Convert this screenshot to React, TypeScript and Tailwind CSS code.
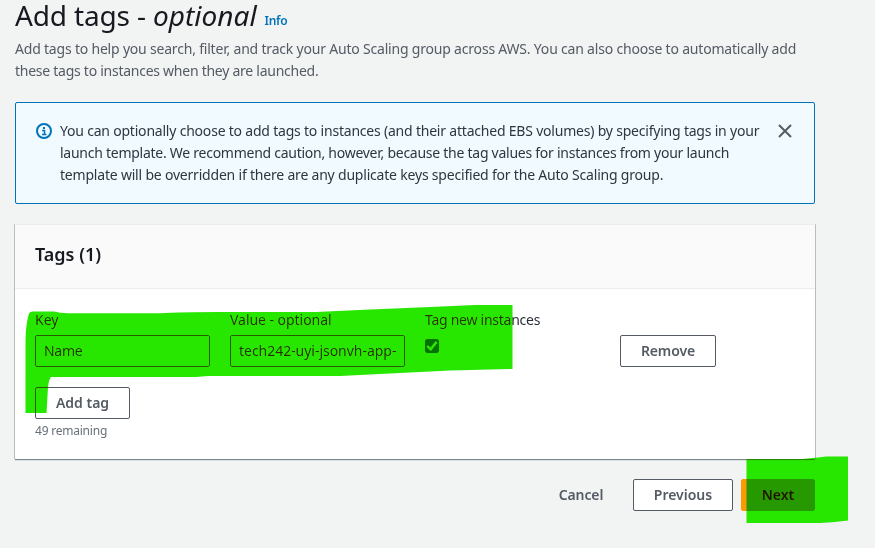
import type { ReactNode } from "react";

function Button({ children, className }: { children: ReactNode; className: string }) {
  return (
    <button
      className={`flex h-8 shrink-0 items-center justify-center whitespace-nowrap rounded-[2px] border text-sm font-semibold leading-[22px] ${className}`}
    >
      {children}
    </button>
  );
}

function TextField({ label, value, trackingClass }: { label: string; value: string; trackingClass: string }) {
  return (
    <div className="w-[175px]">
      <div className="h-[22px] whitespace-nowrap leading-[22px] tracking-[-0.04px]">{label}</div>
      <div
        className={`mt-1 flex h-8 items-center overflow-hidden whitespace-nowrap rounded-[2px] border border-[#545b64] bg-white px-2 ${trackingClass}`}
      >
        {value}
      </div>
    </div>
  );
}

function InfoIcon() {
  return (
    <svg viewBox="0 0 16 16" className="mt-[3px] h-4 w-4 shrink-0" fill="none" stroke="#0073bb">
      <circle cx="8" cy="8" r="7" strokeWidth="2" />
      <path d="M6 7.500h2.500V12M6 11.500h4.500" strokeWidth="1.6" />
      <path d="M7 5h2" strokeWidth="2" />
    </svg>
  );
}

function CloseIcon() {
  return (
    <svg viewBox="0 0 14 14" className="mt-1 h-3.5 w-3.5 shrink-0" fill="none" stroke="#545b64" strokeWidth="2">
      <path d="M1 1l12 12M13 1L1 13" />
    </svg>
  );
}

function Highlights() {
  return (
    <svg
      viewBox="0 0 875 548"
      className="pointer-events-none absolute left-0 top-0 h-[548px] w-[875px] mix-blend-darken"
      fill="#27e600"
    >
      <path d="M25.500 413V340Q26 322 29 313.500Q30 311.500 33 311.500H54Q60 313 68 313.200H160Q180 312 220 312H316L370 309.500L430 307L475 305H512.500V369L450 370.500L400 373L340 376H208L196 377H51Q49 379 48 387L46.500 413Z" />
      <path d="M746.500 459H802L818 457.500L826 456.500H848V520.500L832 522.300L820 523H746.500Z" />
    </svg>
  );
}

export default function App() {
  return (
    <div className="relative isolate h-[548px] w-[875px] bg-[#f2f3f3] pl-[15px] font-['Noto_Sans','Open_Sans',sans-serif] text-sm text-[#16191f]">
      <header className="h-[102px] w-[800px]">
        <h1 className="flex h-[36px] items-baseline whitespace-nowrap text-[28px] leading-[31px]">
          <span className="whitespace-pre tracking-[-0.15px]">Add tags - </span>
          <i>optional</i>
          <a className="relative -top-px ml-[8px] text-xs font-semibold tracking-[-0.3px] text-[#0073bb]">Info</a>
        </h1>
        <p className="mt-[2px] whitespace-nowrap leading-[22px] text-[#545b64]">
          <span className="block tracking-[-0.197px]">
            Add tags to help you search, filter, and track your Auto Scaling group across AWS. You can also choose to automatically add
          </span>
          <span className="block tracking-[-0.26px]">these tags to instances when they are launched.</span>
        </p>
      </header>

      <section className="flex h-[102px] w-[800px] rounded-[2px] border border-[#0073bb] bg-[#f1faff] pl-5 pt-[17px] text-[#2f363f]">
        <InfoIcon />
        <p className="ml-2 w-[718px] whitespace-nowrap leading-[22px]">
          <span className="block tracking-[-0.207px]">
            You can optionally choose to add tags to instances (and their attached EBS volumes) by specifying tags in your
          </span>
          <span className="block tracking-[-0.26px]">
            launch template. We recommend caution, however, because the tag values for instances from your launch
          </span>
          <span className="block tracking-[-0.2px]">
            template will be overridden if there are any duplicate keys specified for the Auto Scaling group.
          </span>
        </p>
        <CloseIcon />
      </section>

      <section className="mt-5 h-[235px] w-[800px] border-t border-[#eaeded] bg-white shadow-[0_1px_1px_0_rgba(0,28,36,0.5),1px_0_0_0_#c9cdcf,-1px_0_0_0_#c9cdcf]">
        <div className="flex h-16 items-center border-b border-[#eaeded] bg-[#fafafa] px-5 pb-[5px]">
          <h2 className="text-lg font-semibold leading-[22px]">Tags (1)</h2>
        </div>
        <div className="px-5 pt-5 text-[#2b3139]">
          <div className="flex h-[58px] gap-5">
            <TextField label="Key" value="Name" trackingClass="tracking-[-0.3px]" />
            <TextField label="Value - optional" value="tech242-uyi-jsonvh-app-" trackingClass="tracking-[-0.03px]" />
            <div className="w-[175px]">
              <div className="h-[22px] whitespace-nowrap leading-[22px] tracking-[-0.26px]">Tag new instances</div>
              <div className="mt-[8px] flex h-3.5 w-3.5 items-center justify-center rounded-[2px] bg-[#0073bb]">
                <svg viewBox="0 0 14 14" className="h-3.5 w-3.5" fill="none" stroke="white" strokeWidth="2.200">
                  <path d="M2.300 7L5.700 10.300L11.500 3" />
                </svg>
              </div>
            </div>
            <div className="flex items-end">
              <Button className="w-24 border-[#545b64] bg-white tracking-[-0.1px] text-[#545b64]">Remove</Button>
            </div>
          </div>
          <Button className="mt-5 w-[95px] border-[#545b64] bg-white text-[#545b64]">Add tag</Button>
          <div className="mt-[3px] text-xs leading-[18px] tracking-[-0.22px] text-[#687078]">49 remaining</div>
        </div>
      </section>

      <footer className="mt-5 flex w-[800px] justify-end">
        <Button className="mr-[10px] w-[84px] border-transparent tracking-[-0.1px] text-[#545b64]">Cancel</Button>
        <Button className="mr-2 w-[100px] border-[#545b64] bg-white text-[#545b64]">Previous</Button>
        <Button className="w-[74px] border-[#ff9900] bg-[#ff9900] text-[#16191f]">Next</Button>
      </footer>

      <Highlights />
    </div>
  );
}
